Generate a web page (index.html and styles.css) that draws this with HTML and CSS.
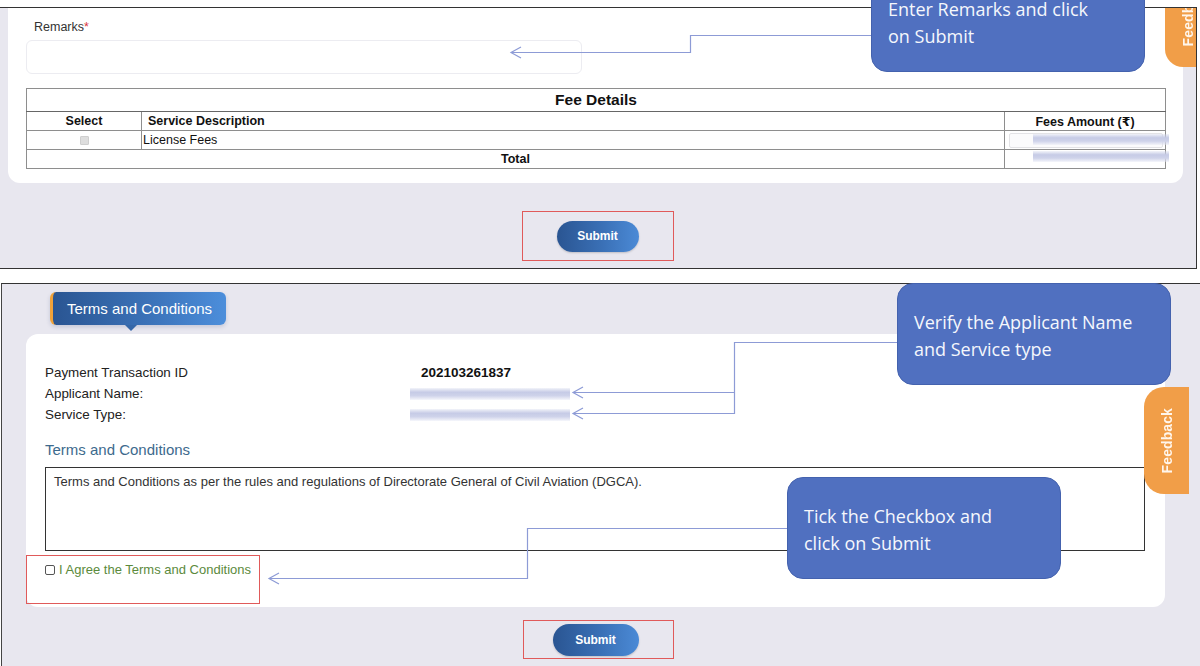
FILE: index.html
```html
<!DOCTYPE html>
<html lang="en">
<head>
<meta charset="utf-8">
<title>Remarks and Terms and Conditions</title>
<link rel="stylesheet" href="styles.css">
</head>
<body>
<div class="page">
  <section class="shot shot-top">
    <div class="card card-remarks">
      <div class="field-label">Remarks<span class="req">*</span></div>
      <div class="remarks-input"></div>
      <table class="fee-table">
        <colgroup><col class="c-select"><col class="c-desc"><col class="c-amt"></colgroup>
        <tr class="r-title"><th colspan="3">Fee Details</th></tr>
        <tr class="r-head"><th>Select</th><th class="left">Service Description</th><th>Fees Amount (₹)</th></tr>
        <tr class="r-data">
          <td class="center"><span class="mini-check"></span></td>
          <td class="desc">License Fees</td>
          <td class="amt"><div class="amt-input"></div><div class="redact redact-a"></div></td>
        </tr>
        <tr class="r-total">
          <th colspan="2">Total</th>
          <td class="amt"><div class="redact redact-b"></div></td>
        </tr>
      </table>
    </div>
    <div class="submit-row submit-row-top">
      <div class="annot-box"><button class="btn">Submit</button></div>
    </div>
    <div class="feedback feedback-top"><span>Feedback</span></div>
  </section>

  <section class="shot shot-bottom">
    <div class="tab-head">Terms and Conditions</div>
    <div class="card card-terms">
      <div class="info-grid">
        <div class="k">Payment Transaction ID</div><div class="v txn">202103261837</div>
        <div class="k">Applicant Name:</div><div class="v"><div class="redact redact-line"></div></div>
        <div class="k">Service Type:</div><div class="v"><div class="redact redact-line"></div></div>
      </div>
      <h3 class="terms-title">Terms and Conditions</h3>
      <div class="terms-box">Terms and Conditions as per the rules and regulations of Directorate General of Civil Aviation (DGCA).</div>
      <label class="agree"><span class="box"></span>I Agree the Terms and Conditions</label>
    </div>
    <div class="submit-row submit-row-bottom">
      <div class="annot-box annot-box-b"><button class="btn btn-b">Submit</button></div>
    </div>
    <div class="feedback feedback-side"><span>Feedback</span></div>
  </section>

  <svg class="connectors" width="1200" height="666" viewBox="0 0 1200 666">
    <path d="M871,35.5 H690.5 V52.5 H511"/>
    <path d="M521,47 L511,52.5 L521,58"/>
    <path d="M897,342.5 H734.5 V413.5 H573"/>
    <path d="M734.5,392.5 H573"/>
    <path d="M583,387 L573,392.5 L583,398"/>
    <path d="M583,408 L573,413.5 L583,419"/>
    <path d="M788,528.5 H527.5 V578.5 H269"/>
    <path d="M279,573 L269,578.5 L279,584"/>
  </svg>

  <div class="annot-rect agree-rect"></div>

  <div class="callout callout-1">Enter Remarks and click<br>on Submit</div>
  <div class="callout callout-2">Verify the Applicant Name<br>and Service type</div>
  <div class="callout callout-3">Tick the Checkbox and<br>click on Submit</div>
</div>
</body>
</html>
```

FILE: styles.css
```css
* { box-sizing: border-box; }

html, body {
  margin: 0;
  padding: 0;
  background: #ffffff;
}

body {
  font-family: "Liberation Sans", Arial, "DejaVu Sans", sans-serif;
  color: #222;
}

.page {
  position: relative;
  width: 1200px;
  height: 666px;
  overflow: hidden;
  background: #ffffff;
}

/* ---------- screenshot frames ---------- */
.shot {
  position: relative;
  overflow: hidden;
  background: #e8e7ef;
}

.shot-top {
  margin-top: 7px;
  width: 1197px;
  height: 262px;
  border-top: 1px solid #333;
  border-right: 1px solid #333;
  border-bottom: 1px solid #333;
}

.shot-bottom {
  margin-top: 14px;
  margin-left: 1px;
  width: 1199px;
  height: 383px;
  border-top: 1px solid #333;
  border-left: 1px solid #444;
  padding: 8px 0 0 24px;
}

/* ---------- cards ---------- */
.card {
  background: #ffffff;
}

.card-remarks {
  margin-left: 8px;
  width: 1175px;
  height: 175px;
  padding: 12px 18px 0;
  border-radius: 0 0 12px 12px;
}

.field-label {
  margin-left: 8px;
  font-size: 12.5px;
  line-height: 14px;
  color: #333;
}

.req { color: #d9363e; }

.remarks-input {
  margin-top: 6px;
  width: 556px;
  height: 34px;
  border: 1px solid #ececf1;
  border-radius: 6px;
  background: #fff;
}

/* ---------- fee table ---------- */
.fee-table {
  margin-top: 14px;
  width: 1139px;
  border-collapse: collapse;
  table-layout: fixed;
  border: 1px solid #555;
  color: #111;
}

.c-select { width: 115px; }
.c-desc { width: 863px; }
.c-amt { width: 161px; }

.fee-table th,
.fee-table td {
  padding: 0;
  font-size: 12.5px;
  border: 1px solid #8e8e8e;
  vertical-align: middle;
}

.fee-table th { font-weight: bold; text-align: center; }
.fee-table th.left { text-align: left; padding-left: 6px; }
.fee-table td.center { text-align: center; }
.fee-table td.desc { padding-left: 1px; }

.r-title { height: 23px; }
.r-title th { font-size: 15.5px; border-bottom-color: #666; }
.r-head { height: 19px; }
.r-data { height: 19px; }
.r-total { height: 19px; }

.mini-check {
  display: inline-block;
  width: 9px;
  height: 9px;
  background: #dedede;
  border: 1px solid #cfcfcf;
  border-radius: 1px;
  vertical-align: middle;
}

.fee-table td.amt { position: relative; }

.amt-input {
  margin: 1px 2px 1px 4px;
  height: 15px;
  border: 1px solid #e3e3e6;
  border-radius: 2px;
  background: #fbfbfc;
}

.redact {
  background: linear-gradient(to bottom, rgba(214,218,238,0.3) 0%, #c6cbe6 35%, #cfd3ea 65%, rgba(232,234,246,0.4) 100%);
  filter: blur(0.7px);
}

.redact-a,
.redact-b {
  position: absolute;
  left: 28px;
  width: 136px;
  height: 11px;
}
.redact-a { top: 3px; }
.redact-b { top: 1px; }

.redact-line {
  width: 160px;
  height: 12px;
}

/* ---------- submit ---------- */
.submit-row {
  display: flex;
  justify-content: center;
}

.submit-row-top {
  margin-top: 28px;
  margin-left: 10px;
  width: 1175px;
}

.submit-row-bottom {
  margin-top: 13px;
  margin-left: 3px;
  width: 1139px;
}

.annot-box {
  width: 152px;
  height: 50px;
  border: 1.5px solid #e05a5a;
  display: flex;
  align-items: center;
  justify-content: center;
}

.annot-box-b {
  width: 151px;
  height: 39px;
  padding-right: 6px;
}

.btn {
  width: 82px;
  height: 31px;
  border: none;
  border-radius: 16px;
  background: linear-gradient(90deg, #2a5592 0%, #3a70b6 55%, #4b8ad6 100%);
  color: #ffffff;
  font-family: "Liberation Sans", Arial, sans-serif;
  font-size: 12px;
  font-weight: bold;
  box-shadow: 0 1px 2px rgba(0,0,0,0.18);
  padding: 0;
}

.btn-b {
  width: 86px;
  height: 32px;
}

/* ---------- feedback tabs ---------- */
.feedback {
  position: absolute;
  width: 45px;
  height: 107px;
  background: #f19e48;
  border-radius: 20px 0 0 20px;
  display: flex;
  align-items: center;
  justify-content: center;
}

.feedback span {
  writing-mode: vertical-rl;
  transform: rotate(180deg);
  color: #fff6ec;
  font-size: 14px;
  font-weight: bold;
  letter-spacing: 0.1px;
}

.feedback-top {
  left: 1165px;
  top: -48px;
  border-radius: 0 0 0 18px;
}

.feedback-side {
  left: 1142px;
  top: 103px;
}

/* ---------- terms card ---------- */
.tab-head {
  position: relative;
  margin-left: 24px;
  width: 176px;
  height: 33px;
  padding-left: 14px;
  border-left: 3px solid #f0a23a;
  border-radius: 6px;
  background: linear-gradient(90deg, #2a5592 0%, #3b72b8 55%, #4c8edb 100%);
  color: #ffffff;
  font-size: 15px;
  line-height: 33px;
  box-shadow: 0 2px 4px rgba(40,60,110,0.18);
}

.tab-head::after {
  content: "";
  position: absolute;
  left: 72px;
  bottom: -6px;
  border-left: 6px solid transparent;
  border-right: 6px solid transparent;
  border-top: 6px solid #3567a8;
}

.card-terms {
  margin-top: 9px;
  width: 1139px;
  height: 273px;
  padding: 28px 20px 29px 19px;
  border-radius: 12px;
}

.info-grid {
  display: grid;
  grid-template-columns: 365px 1fr;
  grid-auto-rows: 21px;
  align-items: center;
  font-size: 13.4px;
  color: #222;
}

.txn {
  font-weight: bold;
  font-size: 13.5px;
  padding-left: 11px;
  color: #111;
}

.terms-title {
  margin: 15px 0 0;
  font-size: 15px;
  font-weight: normal;
  line-height: 20px;
  color: #3d6a8d;
}

.terms-box {
  margin-top: 7px;
  height: 84px;
  border: 1px solid #333;
  padding: 6px 8px;
  font-size: 13px;
  line-height: 16px;
  color: #333;
}

.agree {
  display: flex;
  align-items: center;
  gap: 4px;
  margin-top: 11px;
  font-size: 13px;
  line-height: 16px;
  color: #5b8a3c;
}

.agree .box {
  width: 10px;
  height: 10px;
  border: 1px solid #555;
  border-radius: 2px;
  background: #fff;
}

/* ---------- annotations ---------- */
.connectors {
  position: absolute;
  left: 0;
  top: 0;
  pointer-events: none;
  fill: none;
  stroke: #8d9bd6;
  stroke-width: 1.2;
}

.annot-rect {
  position: absolute;
  border: 1.5px solid #e05a5a;
}

.agree-rect {
  left: 26px;
  top: 555px;
  width: 234px;
  height: 49px;
}

.callout {
  position: absolute;
  width: 274px;
  height: 102px;
  padding: 25px 16px;
  background: #5070c0;
  border: 1px solid #4462ae;
  border-radius: 16px;
  color: #f5f7fc;
  font-family: "Open Sans", "Noto Sans", sans-serif;
  font-size: 18px;
  line-height: 27px;
  white-space: nowrap;
}

.callout-1 { left: 871px; top: -30px; }
.callout-2 { left: 897px; top: 283px; }
.callout-3 { left: 787px; top: 477px; }
```
